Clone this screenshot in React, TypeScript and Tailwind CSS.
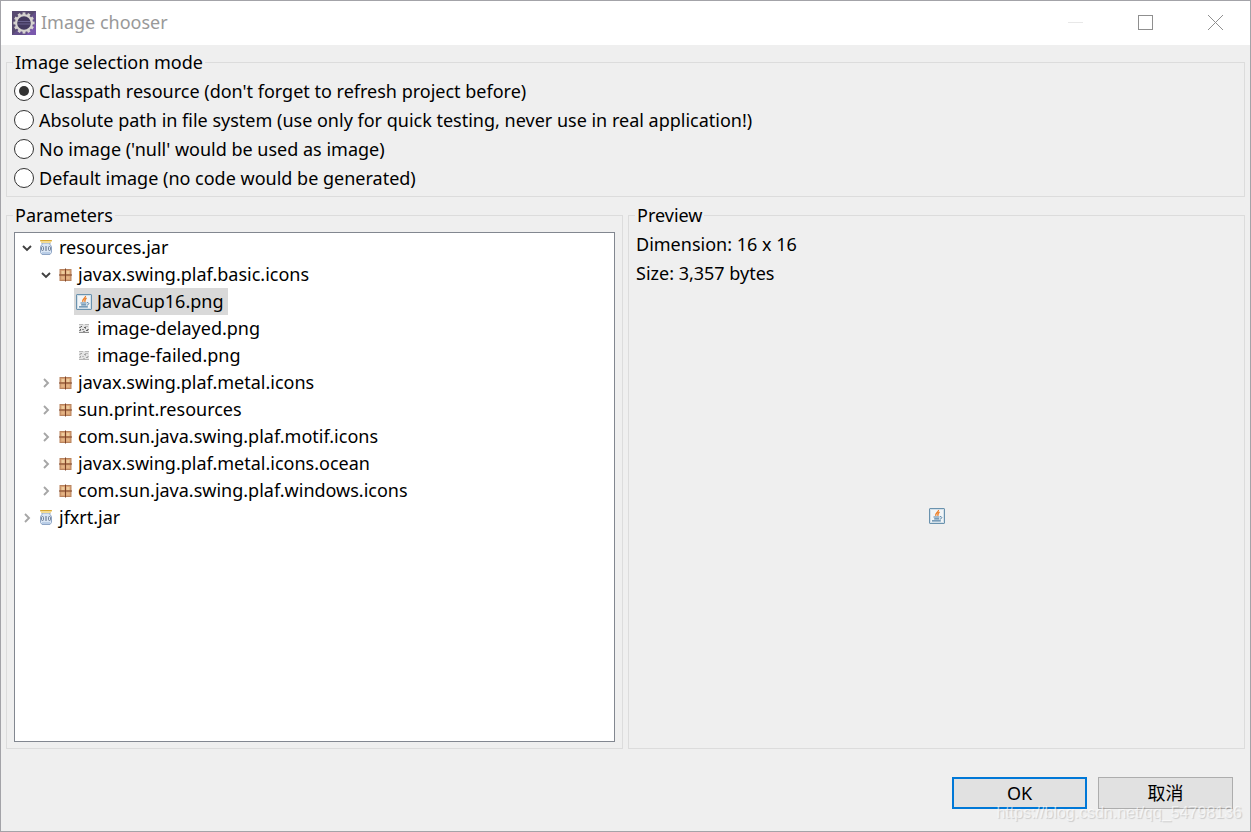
import { useState } from "react";
import type { ReactNode } from "react";
import clsx from "clsx";

type IconName = "jar" | "package" | "java" | "delayed" | "failed";

interface TreeItem {
    label: string;
    icon: IconName;
    children?: TreeItem[];
}

const MODES = [
    { id: "classpath", label: "Classpath resource (don't forget to refresh project before)" },
    { id: "absolute", label: "Absolute path in file system (use only for quick testing, never use in real application!)" },
    { id: "none", label: "No image ('null' would be used as image)" },
    { id: "default", label: "Default image (no code would be generated)" },
];

const RESOURCES: TreeItem[] = [
    {
        label: "resources.jar",
        icon: "jar",
        children: [
            {
                label: "javax.swing.plaf.basic.icons",
                icon: "package",
                children: [
                    { label: "JavaCup16.png", icon: "java" },
                    { label: "image-delayed.png", icon: "delayed" },
                    { label: "image-failed.png", icon: "failed" },
                ],
            },
            { label: "javax.swing.plaf.metal.icons", icon: "package", children: [] },
            { label: "sun.print.resources", icon: "package", children: [] },
            { label: "com.sun.java.swing.plaf.motif.icons", icon: "package", children: [] },
            { label: "javax.swing.plaf.metal.icons.ocean", icon: "package", children: [] },
            { label: "com.sun.java.swing.plaf.windows.icons", icon: "package", children: [] },
        ],
    },
    { label: "jfxrt.jar", icon: "jar", children: [] },
];

const TEETH = [0, 30, 60, 90, 120, 150, 180, 210, 240, 270, 300, 330];

function AppIcon() {
    return (
        <svg viewBox="0 0 24 24" className="size-6" aria-hidden="true">
            <rect width="24" height="24" fill="#64508a" />
            <path d="M0 0H24L0 24Z" fill="#574a70" />
            <path d="M14 24L24 12V24Z" fill="#7a58ad" />
            {TEETH.map((angle) => (
                <rect key={angle} x="10.6" y="1.4" width="2.8" height="4" fill="#d6d3d0" transform={`rotate(${angle} 12 12)`} />
            ))}
            <circle cx="12" cy="12" r="7.9" fill="#43395f" stroke="#d6d3d0" strokeWidth="2.2" />
            <path d="M6 10.5H18M5.5 13H18.5" stroke="#6b6390" strokeWidth="1" />
        </svg>
    );
}

function JarIcon() {
    return (
        <svg viewBox="0 0 16 16" className="size-4" aria-hidden="true">
            <path d="M4 3H12V4.5L13.5 6.5V12.5L12 14.5H4L2.5 12.5V6.5L4 4.5Z" fill="#dbe7f5" stroke="#8fa6c6" />
            <path d="M4 12H12V14H4Z" fill="#b9cde6" />
            <rect x="2" y="0" width="12" height="1.4" rx="0.7" fill="#d9a830" />
            <rect x="3" y="1.4" width="10" height="1.6" fill="#f3dc93" />
            <rect x="3.5" y="6.5" width="2" height="4" rx="1" fill="none" stroke="#5a6b84" strokeWidth="0.8" />
            <path d="M8 6V11" stroke="#5a6b84" />
            <rect x="10.5" y="6.5" width="2" height="4" rx="1" fill="none" stroke="#5a6b84" strokeWidth="0.8" />
        </svg>
    );
}

function PackageIcon() {
    return (
        <svg viewBox="0 0 16 16" className="size-4" aria-hidden="true">
            <rect x="3" y="2.5" width="11" height="11" fill="#d9a274" stroke="#b9845f" />
            <path d="M4.5 4H7.5V7H4.5ZM9.5 4H12.5V7H9.5Z" fill="#edcb9c" />
            <path d="M4.5 9.5H7.5V12H4.5ZM9.5 9.5H12.5V12H9.5Z" fill="#e3b384" />
            <path d="M8.5 1.5V14.5M2 8H15" stroke="#7c4327" />
        </svg>
    );
}

function JavaIcon() {
    return (
        <svg viewBox="0 0 16 16" className="size-4" aria-hidden="true">
            <rect x="0.5" y="0.5" width="15" height="15" rx="0.5" fill="#f2f5f7" stroke="#6a92ae" />
            <rect x="1.5" y="1.5" width="13" height="13" fill="none" stroke="#d3e0e9" />
            <path d="M9.5 2C10 4 6 4.8 6.8 7.8M10.6 4.2C8.8 5 8.6 6 9 7.8" fill="none" stroke="#ed7d24" strokeWidth="1.3" />
            <path d="M4.5 9H10.5M5.2 10.8H10.2M3 12.9H11.8" fill="none" stroke="#5180a5" strokeWidth="1.2" />
            <path d="M11 8.6C13.6 8.4 13.2 10.8 10.8 11.2" fill="none" stroke="#5180a5" />
        </svg>
    );
}

function PictureIcon({ failed }: { failed?: boolean }) {
    return (
        <svg viewBox="0 0 16 16" className="size-4" aria-hidden="true">
            <rect x="3" y="3" width="10" height="9" fill="#e4e4e4" />
            <path d="M3 3.5H7M9 3.5H13M4 5.5H6M9 5.5H12" stroke="#b9b9b9" />
            <path d="M3 6.5H5M6 8.5H8M9 7.5H10M11 8.5H13M3 9.5H5M7 10.5H9" stroke={failed ? "#bcbcbc" : "#8a8a8a"} />
            <path d="M5 5.5H6M8 6.5H10M4 8.5H5M10 9.5H12" stroke={failed ? "#a3a3a3" : "#606060"} />
            <path d="M3 11.5H13" stroke={failed ? "#b5b5b5" : "#8f8f8f"} />
        </svg>
    );
}

function ResourceIcon({ name }: { name: IconName }) {
    switch (name) {
        case "jar":
            return <JarIcon />;
        case "package":
            return <PackageIcon />;
        case "java":
            return <JavaIcon />;
        default:
            return <PictureIcon failed={name === "failed"} />;
    }
}

function Chevron({ open }: { open: boolean }) {
    return (
        <svg viewBox="0 0 12 12" className="size-3" fill="none" strokeWidth="1.9" aria-hidden="true">
            {open ? <path d="M2 4L6 8L10 4" stroke="#404040" /> : <path d="M4 2L8 6L4 10" stroke="#a6a6a6" />}
        </svg>
    );
}

function Group({ title, className, children }: { title: string; className?: string; children: ReactNode }) {
    return (
        <fieldset className={clsx("min-w-0 border border-[#dcdcdc] px-[7px]", className)}>
            <legend className="-ml-px h-[29px] px-0.5 leading-[29px]">{title}</legend>
            {children}
        </fieldset>
    );
}

interface TreeProps {
    items: TreeItem[];
    expanded: string[];
    selected: string;
    onToggle: (label: string) => void;
    onSelect: (label: string) => void;
    nested?: boolean;
}

function Tree({ items, nested, ...rest }: TreeProps) {
    const { expanded, selected, onToggle, onSelect } = rest;

    return (
        <ul className={clsx(nested && "pl-[19px]")}>
            {items.map((item) => {
                const open = expanded.includes(item.label);
                return (
                    <li key={item.label}>
                        <div className="flex h-[27px]">
                            {item.children ? (
                                <button
                                    type="button"
                                    aria-label={item.label}
                                    aria-expanded={open}
                                    onClick={() => onToggle(item.label)}
                                    className="flex w-[21px] items-center justify-center pl-0.5"
                                >
                                    <Chevron open={open} />
                                </button>
                            ) : (
                                <span className="w-[21px]" />
                            )}
                            <button
                                type="button"
                                onClick={() => onSelect(item.label)}
                                className={clsx(
                                    "flex items-center gap-[5px] whitespace-nowrap pr-1 pl-0.5",
                                    selected === item.label && "bg-[#d9d9d9]",
                                )}
                            >
                                <ResourceIcon name={item.icon} />
                                {item.label}
                            </button>
                        </div>
                        {open && item.children && <Tree items={item.children} nested {...rest} />}
                    </li>
                );
            })}
        </ul>
    );
}

export default function App() {
    const [mode, setMode] = useState("classpath");
    const [selected, setSelected] = useState("JavaCup16.png");
    const [expanded, setExpanded] = useState(["resources.jar", "javax.swing.plaf.basic.icons"]);

    const toggle = (label: string) =>
        setExpanded((prev) => (prev.includes(label) ? prev.filter((l) => l !== label) : [...prev, label]));

    return (
        <div className="relative flex min-h-screen flex-col border border-[#a3a3a8] bg-[#efefef] font-['Noto_Sans','Noto_Sans_CJK_SC',sans-serif] text-[18px] leading-[27px] text-black">
            <header className="flex h-11 items-center bg-white pb-px pl-[11px]">
                <AppIcon />
                <h1 className="flex-1 pl-[5px] text-[#999999]">Image chooser</h1>
                <button type="button" aria-label="Minimize" disabled className="flex h-full w-[70px] items-center justify-center">
                    <span className="h-px w-[15px] bg-[#e8e8e8]" />
                </button>
                <button type="button" aria-label="Maximize" className="flex h-full w-[70px] items-center justify-center">
                    <span className="size-[15px] border border-[#8f8f8f]" />
                </button>
                <button type="button" aria-label="Close" className="flex h-full w-[70px] items-center justify-center">
                    <svg viewBox="0 0 15 15" className="size-[15px]" stroke="#8f8f8f" aria-hidden="true">
                        <path d="M0 0L15 15M15 0L0 15" />
                    </svg>
                </button>
            </header>

            <main className="flex flex-1 flex-col gap-1 px-[5px] pt-[3px]">
                <Group title="Image selection mode" className="pb-[3px]">
                    {MODES.map((m) => (
                        <label key={m.id} className="flex h-[29px] items-center gap-[5px] pb-px">
                            <input
                                type="radio"
                                name="mode"
                                checked={mode === m.id}
                                onChange={() => setMode(m.id)}
                                className="flex size-5 shrink-0 appearance-none items-center justify-center rounded-full border border-[#333333] bg-white before:size-2.5 before:rounded-full checked:before:bg-[#333333]"
                            />
                            {m.label}
                        </label>
                    ))}
                </Group>

                <div className="grid flex-1 grid-cols-2 gap-[5px]">
                    <Group title="Parameters" className="flex flex-col pt-0.5 pb-1.5">
                        <div className="flex-1 border border-[#828790] bg-white pt-px">
                            <Tree
                                items={RESOURCES}
                                expanded={expanded}
                                selected={selected}
                                onToggle={toggle}
                                onSelect={setSelected}
                            />
                        </div>
                    </Group>

                    <Group title="Preview" className="flex flex-col pb-[5px]">
                        <p className="leading-[29px]">Dimension: 16 x 16</p>
                        <p className="leading-[29px]">Size: 3,357 bytes</p>
                        <div className="flex flex-1 items-center justify-center">
                            <JavaIcon />
                        </div>
                    </Group>
                </div>
            </main>

            <footer className="flex justify-end gap-[11px] pt-7 pr-[17px] pb-[22px]">
                <button type="button" className="h-8 w-[135px] border-2 border-[#0078d7] bg-[#e1e1e1]">
                    OK
                </button>
                <button type="button" className="h-8 w-[135px] border border-[#adadad] bg-[#e1e1e1]">
                    取消
                </button>
            </footer>

            <span className="pointer-events-none absolute right-2 bottom-2 font-['Liberation_Sans',sans-serif] text-[16px] leading-5 text-white/60 [text-shadow:1px_1px_1px_rgba(0,0,0,0.15)]">
                https://blog.csdn.net/qq_54798136
            </span>
        </div>
    );
}
